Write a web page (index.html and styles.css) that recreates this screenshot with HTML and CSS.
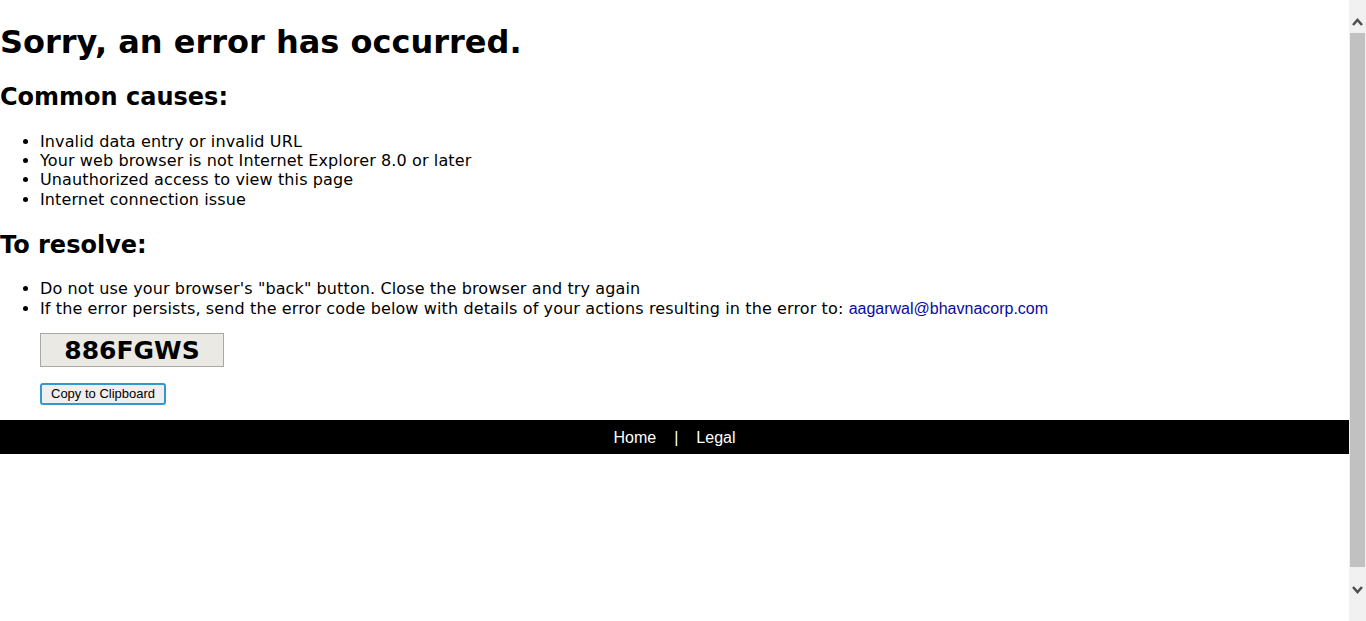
FILE: index.html
```html
<!DOCTYPE html>
<html lang="en">
<head>
<meta charset="utf-8">
<title>Error</title>
<link rel="stylesheet" href="styles.css">
</head>
<body>
<div class="page">
  <div class="content">
    <h1 class="title">Sorry, an error has occurred.</h1>
    <h2 class="subtitle">Common causes:</h2>
    <ul class="list">
      <li>Invalid data entry or invalid URL</li>
      <li>Your web browser is not Internet Explorer 8.0 or later</li>
      <li>Unauthorized access to view this page</li>
      <li>Internet connection issue</li>
    </ul>
    <h2 class="subtitle">To resolve:</h2>
    <ul class="list">
      <li>Do not use your browser's "back" button. Close the browser and try again</li>
      <li>If the error persists, send the error code below with details of your actions resulting in the error to: <a class="mail" href="#">aagarwal@bhavnacorp.com</a></li>
    </ul>
    <div class="code-area">
      <div class="code">886FGWS</div>
      <button class="copy" type="button">Copy to Clipboard</button>
    </div>
  </div>
  <div class="footer">
    <a class="foot-link" href="#">Home</a>
    <span class="sep">|</span>
    <a class="foot-link" href="#">Legal</a>
  </div>
</div>
<div class="scrollbar">
  <div class="sb-up">
    <svg width="11" height="8" viewBox="0 0 11 8"><polyline points="1,7 5.5,2 10,7" fill="none" stroke="#505050" stroke-width="2.6"/></svg>
  </div>
  <div class="sb-thumb"></div>
  <div class="sb-down">
    <svg width="11" height="8" viewBox="0 0 11 8"><polyline points="1,1 5.5,6 10,1" fill="none" stroke="#505050" stroke-width="2.6"/></svg>
  </div>
</div>
</body>
</html>
```
FILE: styles.css
```css
html, body {
  height: 100%;
  overflow: hidden;
}
body {
  margin: 0;
  display: flex;
  font-family: "DejaVu Sans", Verdana, sans-serif;
  color: #000;
  background: #fff;
}
.page {
  flex: 1;
  min-width: 0;
}
.content {
  padding-top: 1px;
}
.title {
  font-size: 32px;
  line-height: 39px;
  margin: 22px 0 0;
  font-weight: bold;
}
.subtitle {
  font-size: 24px;
  line-height: 29px;
  margin: 21px 0 19.5px;
  font-weight: bold;
}
.list {
  margin: 0;
  padding: 0 0 0.5px 40px;
  font-size: 16px;
  line-height: 19.4px;
  letter-spacing: 0.12px;
}
.mail {
  font-family: "Liberation Sans", Arial, sans-serif;
  font-size: 16px;
  letter-spacing: 0;
  color: #0a0aa0;
  text-decoration: none;
}
.code-area {
  padding: 14.5px 0 15px 40px;
  display: flex;
  flex-direction: column;
  align-items: flex-start;
  gap: 16px;
}
.code {
  width: 182px;
  height: 32px;
  border: 1px solid #a8a8a8;
  background: #ebe9e3;
  font-size: 25px;
  font-weight: bold;
  line-height: 33px;
  text-align: center;
}
.copy {
  font-family: "Liberation Sans", Arial, sans-serif;
  font-size: 13px;
  padding: 1px 9px;
  height: 22px;
  background: #efefef;
  border: 2px solid #3399cc;
  border-radius: 3px;
  color: #000;
}
.footer {
  background: #000;
  height: 34px;
  box-sizing: border-box;
  padding-top: 3px;
  display: flex;
  justify-content: center;
  align-items: center;
  gap: 18px;
  font-family: "Liberation Sans", Arial, sans-serif;
  font-size: 16px;
  color: #fff;
}
.foot-link {
  color: #fff;
  text-decoration: none;
}
.scrollbar {
  width: 17px;
  flex: none;
  height: 100vh;
  background: #f1f1f1;
  display: flex;
  flex-direction: column;
  align-items: center;
}
.sb-up {
  height: 33px;
  display: flex;
  align-items: center;
  justify-content: center;
  box-sizing: border-box;
  padding-top: 10px;
}
.sb-up svg, .sb-down svg {
  display: block;
}
.sb-thumb {
  width: 15px;
  height: 534px;
  background: #c1c1c1;
  flex: none;
}
.sb-down {
  flex: 1;
  padding-top: 19px;
}
```
